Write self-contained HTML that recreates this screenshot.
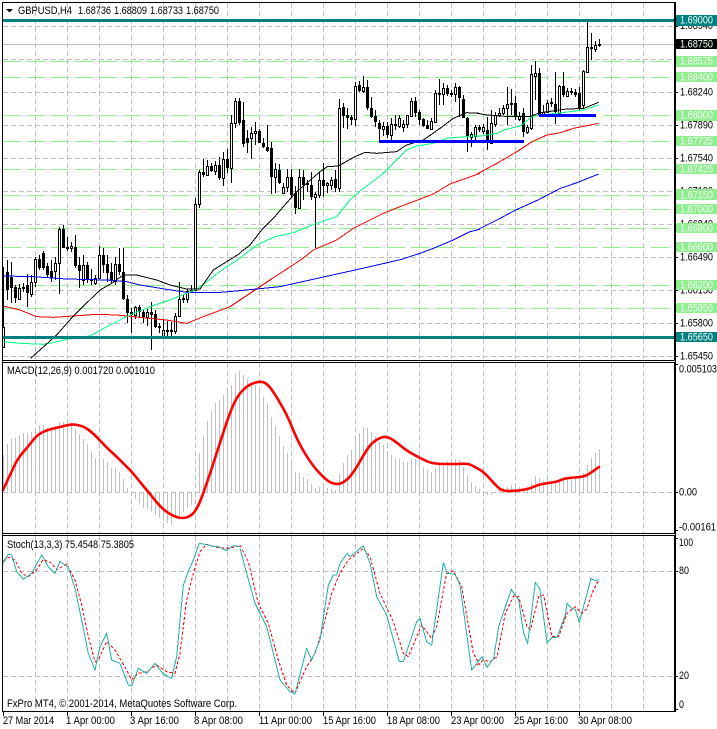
<!DOCTYPE html>
<html><head><meta charset="utf-8"><title>GBPUSD H4</title>
<style>html,body{margin:0;padding:0;background:#fff;width:717px;height:729px;overflow:hidden}svg{display:block}text{font-family:"Liberation Sans",sans-serif;font-size:11px;fill:#000}.l text{fill:#f4fff4}</style></head>
<body>
<svg width="717" height="729" viewBox="0 0 717 729" xmlns="http://www.w3.org/2000/svg">
<rect width="717" height="729" fill="#fff"/>
<!-- grid -->
<g fill="none" stroke="#c0c0c0" stroke-dasharray="5 3" shape-rendering="crispEdges">
<path d="M3 26.5H674M3 59.5H674M3 92.5H674M3 125.5H674M3 158.5H674M3 191.5H674M3 224.5H674M3 257.5H674M3 290.5H674M3 323.5H674M3 356.5H674M3 492.5H674M3 571.5H674M3 676.5H674"/>
<path id="v" d="M35.5 3V359M67.5 3V359M99.5 3V359M131.5 3V359M163.5 3V359M195.5 3V359M227.5 3V359M259.5 3V359M291.5 3V359M323.5 3V359M355.5 3V359M387.5 3V359M419.5 3V359M451.5 3V359M483.5 3V359M515.5 3V359M547.5 3V359M579.5 3V359M611.5 3V359M643.5 3V359"/>
<path d="M35.5 363V533M67.5 363V533M99.5 363V533M131.5 363V533M163.5 363V533M195.5 363V533M227.5 363V533M259.5 363V533M291.5 363V533M323.5 363V533M355.5 363V533M387.5 363V533M419.5 363V533M451.5 363V533M483.5 363V533M515.5 363V533M547.5 363V533M579.5 363V533M611.5 363V533M643.5 363V533"/>
<path d="M35.5 536V711M67.5 536V711M99.5 536V711M131.5 536V711M163.5 536V711M195.5 536V711M227.5 536V711M259.5 536V711M291.5 536V711M323.5 536V711M355.5 536V711M387.5 536V711M419.5 536V711M451.5 536V711M483.5 536V711M515.5 536V711M547.5 536V711M579.5 536V711M611.5 536V711M643.5 536V711"/>
</g>
<!-- level lines -->
<path d="M3 44.5H674" stroke="#c0c0c0" shape-rendering="crispEdges"/>
<path d="M3 61.5H669M3 77.5H669M3 115.5H669M3 141.5H669M3 169.5H669M3 195.5H669M3 209.5H669M3 228.5H669M3 247.5H669M3 285.5H669M3 308.5H669" stroke="#90ee90" stroke-dasharray="18 6" fill="none" shape-rendering="crispEdges"/>
<!-- wicks -->
<path fill="none" stroke="#000" shape-rendering="crispEdges" d="M3.5 267V347M7.5 260V300M11.5 262V303M15.5 285V303M19.5 284V300M23.5 283V292M27.5 274V307M31.5 275V297M35.5 257V287M39.5 255V270M43.5 251V270M47.5 263V278M51.5 260V282M55.5 257V280M59.5 227V294M63.5 225V248M67.5 237V251M71.5 242V252M75.5 235V268M79.5 257V288M83.5 255V285M87.5 262V283M91.5 269V285M95.5 275V285M99.5 246V278M103.5 248V273M107.5 255V282M111.5 263V283M115.5 257V285M119.5 248V275M123.5 248V300M127.5 295V323M131.5 308V333M135.5 306V319M139.5 305V317M143.5 310V323M147.5 309V326M151.5 302V350M155.5 310V328M159.5 323V333M163.5 319V338M167.5 321V338M171.5 322V338M175.5 313V334M179.5 282V317M183.5 295V303M187.5 289V303M191.5 285V293M195.5 198V290M199.5 170V208M203.5 159V177M207.5 160V175M211.5 163V172M215.5 161V175M219.5 157V180M223.5 152V186M227.5 149V173M231.5 115V183M235.5 98V128M239.5 98V125M243.5 102V147M247.5 130V153M251.5 127V159M255.5 122V145M259.5 129V143M263.5 138V148M267.5 125V152M271.5 142V194M275.5 163V193M279.5 164V184M283.5 183V194M287.5 169V192M291.5 169V197M295.5 186V214M299.5 169V209M303.5 170V200M307.5 180V192M311.5 172V200M315.5 192V248M319.5 172V198M323.5 163V197M327.5 182V193M331.5 177V190M335.5 170V192M339.5 99V192M343.5 103V128M347.5 108V129M351.5 115V125M355.5 82V126M359.5 81V92M363.5 76V93M367.5 80V110M371.5 97V118M375.5 110V127M379.5 120V142M383.5 122V136M387.5 122V138M391.5 118V140M395.5 115V130M399.5 115V128M403.5 120V132M407.5 115V128M411.5 98V117M415.5 97V117M419.5 110V125M423.5 118V127M427.5 120V129M431.5 118V130M435.5 90V123M439.5 79V105M443.5 83V105M447.5 85V96M451.5 90V97M455.5 83V102M459.5 86V117M463.5 95V118M467.5 117V152M471.5 132V147M475.5 125V142M479.5 125V132M483.5 124V134M487.5 117V150M491.5 110V143M495.5 112V127M499.5 108V117M503.5 105V115M507.5 87V125M511.5 89V115M515.5 96V120M519.5 112V121M523.5 108V137M527.5 125V134M531.5 65V130M535.5 61V100M539.5 68V117M543.5 105V117M547.5 100V113M551.5 98V107M555.5 72V124M559.5 85V115M563.5 72V97M567.5 88V97M571.5 88V95M575.5 89V97M579.5 87V110M583.5 70V109M587.5 21V72M591.5 33V60M595.5 41V52M599.5 39V47"/>
<!-- black bodies -->
<path fill="#000" shape-rendering="crispEdges" d="M6 272h3v18h-3zM10 277h3v11h-3zM14 287h3v11h-3zM22 287h3v2h-3zM26 285h3v8h-3zM38 259h3v9h-3zM42 253h3v15h-3zM46 266h3v9h-3zM50 271h3v7h-3zM62 229h3v19h-3zM66 247h3v2h-3zM74 247h3v19h-3zM78 265h3v6h-3zM86 265h3v14h-3zM90 279h3v2h-3zM102 255h3v10h-3zM106 264h3v9h-3zM110 272h3v9h-3zM118 264h3v8h-3zM122 272h3v27h-3zM126 299h3v14h-3zM130 312h3v3h-3zM138 307h3v5h-3zM142 312h3v5h-3zM150 312h3v3h-3zM154 314h3v13h-3zM158 326h3v2h-3zM166 330h3v2h-3zM170 330h3v2h-3zM182 298h3v2h-3zM190 290h3v3h-3zM202 172h3v3h-3zM210 166h3v5h-3zM218 165h3v13h-3zM226 159h3v9h-3zM238 101h3v22h-3zM242 120h3v24h-3zM246 138h3v5h-3zM258 131h3v12h-3zM262 143h3v4h-3zM266 147h3v4h-3zM270 148h3v29h-3zM278 170h3v13h-3zM290 177h3v18h-3zM294 193h3v15h-3zM302 177h3v8h-3zM306 183h3v2h-3zM310 185h3v12h-3zM322 180h3v6h-3zM334 179h3v9h-3zM342 107h3v9h-3zM346 115h3v3h-3zM350 117h3v3h-3zM358 85h3v6h-3zM366 87h3v21h-3zM370 108h3v9h-3zM374 116h3v6h-3zM378 123h3v6h-3zM386 126h3v9h-3zM394 124h3v2h-3zM414 101h3v12h-3zM418 112h3v8h-3zM422 119h3v7h-3zM426 125h3v4h-3zM438 93h3v2h-3zM446 88h3v6h-3zM450 93h3v2h-3zM458 87h3v11h-3zM462 99h3v19h-3zM466 118h3v19h-3zM478 127h3v3h-3zM486 130h3v13h-3zM510 103h3v2h-3zM514 103h3v14h-3zM522 113h3v19h-3zM538 73h3v42h-3zM550 102h3v2h-3zM554 104h3v8h-3zM562 86h3v9h-3zM570 91h3v2h-3zM574 92h3v3h-3zM578 93h3v16h-3zM590 47h3v2h-3zM598 44h3v2h-3z"/>
<!-- white bodies -->
<path fill="#fff" stroke="#000" shape-rendering="crispEdges" d="M2.5 327.5h2V347.5h-2zM18.5 288.5h2V299.5h-2zM30.5 282.5h2V294.5h-2zM34.5 259.5h2V282.5h-2zM54.5 263.5h2V271.5h-2zM58.5 229.5h2V263.5h-2zM70.5 246.5h2V248.5h-2zM82.5 265.5h2V280.5h-2zM94.5 278.5h2V283.5h-2zM98.5 255.5h2V278.5h-2zM114.5 264.5h2V281.5h-2zM134.5 307.5h2V315.5h-2zM146.5 312.5h2V317.5h-2zM162.5 330.5h2V338.5h-2zM174.5 316.5h2V331.5h-2zM178.5 299.5h2V316.5h-2zM186.5 291.5h2V299.5h-2zM194.5 204.5h2V290.5h-2zM198.5 172.5h2V204.5h-2zM206.5 166.5h2V175.5h-2zM214.5 165.5h2V171.5h-2zM222.5 159.5h2V178.5h-2zM230.5 123.5h2V168.5h-2zM234.5 101.5h2V123.5h-2zM250.5 133.5h2V138.5h-2zM254.5 131.5h2V133.5h-2zM274.5 169.5h2V177.5h-2zM282.5 187.5h2V193.5h-2zM286.5 177.5h2V187.5h-2zM298.5 177.5h2V208.5h-2zM314.5 194.5h2V197.5h-2zM318.5 180.5h2V195.5h-2zM326.5 183.5h2V185.5h-2zM330.5 180.5h2V185.5h-2zM338.5 108.5h2V188.5h-2zM354.5 86.5h2V119.5h-2zM362.5 87.5h2V91.5h-2zM382.5 126.5h2V129.5h-2zM390.5 124.5h2V135.5h-2zM398.5 118.5h2V126.5h-2zM402.5 124.5h2V127.5h-2zM406.5 115.5h2V124.5h-2zM410.5 101.5h2V116.5h-2zM430.5 121.5h2V129.5h-2zM434.5 93.5h2V122.5h-2zM442.5 88.5h2V94.5h-2zM454.5 87.5h2V94.5h-2zM470.5 134.5h2V137.5h-2zM474.5 127.5h2V136.5h-2zM482.5 127.5h2V131.5h-2zM490.5 123.5h2V143.5h-2zM494.5 115.5h2V124.5h-2zM498.5 113.5h2V115.5h-2zM502.5 108.5h2V113.5h-2zM506.5 104.5h2V108.5h-2zM518.5 116.5h2V119.5h-2zM526.5 127.5h2V132.5h-2zM530.5 74.5h2V128.5h-2zM534.5 73.5h2V76.5h-2zM542.5 112.5h2V115.5h-2zM546.5 103.5h2V112.5h-2zM558.5 86.5h2V113.5h-2zM566.5 91.5h2V96.5h-2zM582.5 71.5h2V105.5h-2zM586.5 47.5h2V72.5h-2zM594.5 45.5h2V49.5h-2z"/>
<!-- moving averages -->
<g fill="none" shape-rendering="crispEdges">
<g transform="translate(0,200) scale(.33333)">
<polyline vector-effect="non-scaling-stroke" stroke="#0000ff" points="10,228 100,230 200,237 320,240 380,245 420,255 500,268 560,277 650,278 720,272"/>
<polyline vector-effect="non-scaling-stroke" stroke="#ff0000" points="10,318 60,330 110,350 160,352 220,348 290,343 350,345 400,350 500,360 560,370 610,350 690,320 720,300 810,240 906,177"/>
<polyline vector-effect="non-scaling-stroke" stroke="#00ff7f" points="10,425 60,430 130,433 150,430 205,417 270,408 330,375 390,345 450,320 510,300 560,280 590,268 640,230 680,200 720,175"/>
<polyline vector-effect="non-scaling-stroke" stroke="#000" points="92,475 170,405 220,348 300,270 335,250 370,225 410,225 470,240 510,255 560,267 600,267 640,210 720,160"/>
</g>
<g transform="translate(240,60) scale(.33333)">
<polyline vector-effect="non-scaling-stroke" stroke="#0000ff" points="0,692 120,680 300,640 390,620 485,598 540,580 580,565 640,540 690,515 720,508"/>
<polyline vector-effect="non-scaling-stroke" stroke="#ff0000" points="185,598 220,570 290,540 340,505 430,460 480,440 580,402 630,372 720,340"/>
<polyline vector-effect="non-scaling-stroke" stroke="#00ff7f" points="0,595 30,570 60,550 105,530 160,518 230,490 290,470 330,420 370,385 430,340 500,270 530,258 580,250 620,235 700,228 720,228"/>
<polyline vector-effect="non-scaling-stroke" stroke="#000" points="0,578 30,555 65,510 100,475 130,440 170,395 200,370 240,335 262,320 295,318 345,290 375,277 410,280 470,275 500,255 550,240 600,205 640,175 680,158 720,160"/>
</g>
<g transform="translate(477,0) scale(.33333)">
<polyline vector-effect="non-scaling-stroke" stroke="#0000ff" points="0,690 60,660 120,628 183,600 250,565 300,548 365,522"/>
<polyline vector-effect="non-scaling-stroke" stroke="#ff0000" points="0,522 60,490 120,455 165,425 210,405 250,398 290,385 365,370"/>
<polyline vector-effect="non-scaling-stroke" stroke="#00ff7f" points="0,410 30,405 60,400 80,390 130,378 165,350 190,345 240,340 320,330 365,315"/>
<polyline vector-effect="non-scaling-stroke" stroke="#000" points="0,340 30,345 100,350 160,350 186,339 260,328 320,325 365,307"/>
</g>
</g>
<!-- levels on top -->
<rect x="3" y="19" width="671" height="3" fill="#008080"/>
<rect x="3" y="336" width="671" height="3" fill="#008080"/>
<rect x="379" y="140" width="145" height="3" fill="#0000ff"/>
<rect x="539" y="114" width="57" height="3" fill="#0000ff"/>
<!-- MACD histogram -->
<path fill="none" stroke="#c0c0c0" shape-rendering="crispEdges" d="M3.5 455V492M7.5 444V492M11.5 439V492M15.5 438V492M19.5 435V492M23.5 433V492M27.5 433V492M31.5 432V492M35.5 427V492M39.5 425V492M43.5 425V492M47.5 428V492M51.5 427V492M55.5 426V492M59.5 422V492M63.5 422V492M67.5 423V492M71.5 423V492M75.5 429V492M79.5 434V492M83.5 439V492M87.5 444V492M91.5 452V492M95.5 458V492M99.5 457V492M103.5 459V492M107.5 462V492M111.5 468V492M115.5 468V492M119.5 472V492M123.5 479V492M127.5 488V492M135.5 492V499M139.5 492V503M143.5 492V508M147.5 492V509M151.5 492V512M155.5 492V515M159.5 492V518M163.5 492V521M167.5 492V523M171.5 492V525M175.5 492V518M179.5 492V516M183.5 492V512M187.5 492V508M191.5 492V505M195.5 492V497M199.5 453V492M203.5 436V492M207.5 421V492M211.5 411V492M215.5 403V492M219.5 400V492M223.5 395V492M227.5 392V492M231.5 385V492M235.5 374V492M239.5 371V492M243.5 375V492M247.5 379V492M251.5 384V492M255.5 385V492M259.5 391V492M263.5 397V492M267.5 404V492M271.5 417V492M275.5 426V492M279.5 436V492M283.5 446V492M287.5 453V492M291.5 459V492M295.5 472V492M299.5 473V492M303.5 477V492M307.5 479V492M311.5 484V492M315.5 488V492M319.5 487V492M323.5 487V492M327.5 488V492M331.5 489V492M335.5 490V492M339.5 474V492M343.5 463V492M347.5 455V492M351.5 450V492M355.5 439V492M359.5 433V492M363.5 427V492M367.5 428V492M371.5 432V492M375.5 436V492M379.5 442V492M383.5 445V492M387.5 452V492M391.5 455V492M395.5 458V492M399.5 459V492M403.5 461V492M407.5 462V492M411.5 459V492M415.5 459V492M419.5 463V492M423.5 467V492M427.5 470V492M431.5 472V492M435.5 468V492M439.5 465V492M443.5 463V492M447.5 461V492M451.5 459V492M455.5 459V492M459.5 460V492M463.5 467V492M467.5 475V492M471.5 482V492M475.5 486V492M479.5 489V492M487.5 492V495M491.5 492V495M499.5 490V492M503.5 488V492M507.5 487V492M511.5 485V492M515.5 487V492M519.5 487V492M523.5 488V492M527.5 487V492M531.5 483V492M535.5 476V492M539.5 478V492M543.5 481V492M547.5 480V492M551.5 482V492M555.5 482V492M559.5 479V492M563.5 479V492M567.5 477V492M571.5 477V492M575.5 477V492M579.5 477V492M583.5 473V492M587.5 465V492M591.5 458V492M595.5 453V492M599.5 449V492"/>
<!-- MACD line -->
<path fill="none" stroke="#ff0000" stroke-width="2.6" stroke-linejoin="round" stroke-linecap="round" d="M3 490L6.5 482.5Q10 475 14 466.5Q18 458 22.5 453Q27 448 32 441.5Q37 435 42 432.5Q47 430 53.5 428.5Q60 427 66 425.5Q72 424 77.5 425Q83 426 88 429.5Q93 433 100 440.5Q107 448 112 452.5Q117 457 124.5 464.5Q132 472 136 477Q140 482 145 488Q150 494 156.5 502Q163 510 170 514Q177 518 182.5 518Q188 518 192.5 514Q197 510 202 496.5Q207 483 212 467.5Q217 452 223.5 432Q230 412 234 403.5Q238 395 243 390Q248 385 254 383Q260 381 264 382.5Q268 384 273 391.5Q278 399 283 408Q288 417 293 429.5Q298 442 305 453.5Q312 465 318.5 472Q325 479 329 481.5Q333 484 337.5 484Q342 484 347.5 479Q353 474 360.5 460.5Q368 447 372.5 443Q377 439 381.5 437.5Q386 436 390.5 438.5Q395 441 401 446Q407 451 414.5 455Q422 459 427.5 461.5Q433 464 445 464L458 464Q467 463 471 465Q475 467 479.5 469.5Q484 472 491.5 480.5Q499 489 502 490Q505 491 510 491Q515 491 522 490Q529 489 534.5 486.5Q540 484 548.5 483Q557 482 561 480Q565 478 574.5 477.5Q584 477 588 474.5Q592 472 599 467"/>
<!-- Stochastic -->
<g fill="none" shape-rendering="crispEdges">
<g transform="translate(0,530) scale(.33333)">
<polyline vector-effect="non-scaling-stroke" stroke="#ff0000" stroke-dasharray="3 2" points="10,92 25,82 45,90 65,130 85,140 110,120 130,88 155,100 170,120 200,102 225,150 245,225 265,320 285,395 295,390 320,335 345,360 380,420 395,450 415,430 440,425 470,405 500,425 525,430 540,370 560,210 580,130 600,65 620,43 650,52 680,55 720,48"/>
<polyline vector-effect="non-scaling-stroke" stroke="#20b2aa" points="10,100 25,72 35,75 50,125 70,148 95,130 125,75 145,110 165,130 180,95 205,112 225,175 250,295 265,370 285,420 300,350 320,310 335,390 360,400 385,465 395,468 415,415 440,430 465,400 490,432 515,445 530,380 550,165 565,125 580,90 598,40 625,45 640,50 650,48 665,55 680,62 700,47 720,50"/>
</g>
<g transform="translate(240,530) scale(.33333)">
<polyline vector-effect="non-scaling-stroke" stroke="#ff0000" stroke-dasharray="3 2" points="0,45 25,95 55,220 85,280 115,390 140,465 165,490 200,410 225,370 250,290 275,190 300,130 325,90 370,55 390,80 420,190 460,275 490,370 505,380 545,285 575,325 590,290 620,130 640,122 665,170 700,370 720,405"/>
<polyline vector-effect="non-scaling-stroke" stroke="#20b2aa" points="0,55 20,130 45,220 80,290 120,450 150,485 165,492 200,355 215,390 240,330 265,165 280,135 290,135 300,100 322,70 330,80 370,47 390,100 410,200 440,255 478,395 490,395 530,275 540,265 560,335 575,345 610,98 622,130 645,133 660,165 695,420 720,388"/>
</g>
<g transform="translate(477,530) scale(.33333)">
<polyline vector-effect="non-scaling-stroke" stroke="#ff0000" stroke-dasharray="3 2" points="0,405 20,390 40,395 60,380 85,250 110,198 125,200 150,290 160,300 185,200 200,195 225,320 245,320 270,250 295,230 315,250 330,235 345,190 365,150"/>
<polyline vector-effect="non-scaling-stroke" stroke="#20b2aa" points="0,398 15,380 30,412 50,385 65,290 103,178 125,210 140,310 152,340 175,157 188,175 210,337 225,322 240,322 265,255 270,220 285,235 295,238 307,277 342,145 355,152 365,148"/>
</g>
</g>
<!-- frames -->
<path fill="none" stroke="#000" shape-rendering="crispEdges" d="M2.5 2.5H674.5V360.5H2.5ZM2.5 362.5H674.5V533.5H2.5ZM2.5 535.5H674.5V711.5H2.5ZM2.5 2V712M675.5 2V712"/>
<path fill="none" stroke="#000" shape-rendering="crispEdges" d="M675 26.5h3M675 59.5h3M675 92.5h3M675 125.5h3M675 158.5h3M675 191.5h3M675 224.5h3M675 257.5h3M675 290.5h3M675 323.5h3M675 356.5h3M675 364.5h3M675 492.5h3M675 530.5h3M675 538.5h3M675 571.5h3M675 676.5h3M675 709.5h3M3.5 712v4M67.5 712v4M131.5 712v4M195.5 712v4M259.5 712v4M323.5 712v4M387.5 712v4M451.5 712v4M515.5 712v4M579.5 712v4"/>
<!-- axis text under labels -->
<g>
<text x="680" y="29" textLength="33" lengthAdjust="spacingAndGlyphs">1.68940</text>
<text x="680" y="95.5" textLength="33" lengthAdjust="spacingAndGlyphs">1.68240</text>
<text x="680" y="128.5" textLength="33" lengthAdjust="spacingAndGlyphs">1.67890</text>
<text x="680" y="161.5" textLength="33" lengthAdjust="spacingAndGlyphs">1.67540</text>
<text x="680" y="194.5" textLength="33" lengthAdjust="spacingAndGlyphs">1.67190</text>
<text x="680" y="227.5" textLength="33" lengthAdjust="spacingAndGlyphs">1.66840</text>
<text x="680" y="260.5" textLength="33" lengthAdjust="spacingAndGlyphs">1.66490</text>
<text x="680" y="293.5" textLength="33" lengthAdjust="spacingAndGlyphs">1.66130</text>
<text x="680" y="326.5" textLength="33" lengthAdjust="spacingAndGlyphs">1.65800</text>
<text x="680" y="359.5" textLength="33" lengthAdjust="spacingAndGlyphs">1.65450</text>
<text x="679" y="372.5" textLength="38" lengthAdjust="spacingAndGlyphs">0.005103</text>
<text x="679" y="495.5" textLength="18" lengthAdjust="spacingAndGlyphs">0.00</text>
<text x="679" y="530.5" textLength="37" lengthAdjust="spacingAndGlyphs">-0.00161</text>
<text x="679" y="546" textLength="14" lengthAdjust="spacingAndGlyphs">100</text>
<text x="679" y="574" textLength="10" lengthAdjust="spacingAndGlyphs">80</text>
<text x="679" y="679" textLength="10" lengthAdjust="spacingAndGlyphs">20</text>
<text x="679" y="708" textLength="5" lengthAdjust="spacingAndGlyphs">0</text>
</g>
<!-- price labels -->
<g shape-rendering="crispEdges">
<rect x="676" y="15" width="41" height="11" fill="#008080"/>
<rect x="676" y="39" width="41" height="10" fill="#000"/>
<rect x="676" y="56" width="41" height="11" fill="#90ee90"/>
<rect x="676" y="72" width="41" height="10" fill="#90ee90"/>
<rect x="676" y="110" width="41" height="11" fill="#90ee90"/>
<rect x="676" y="136" width="41" height="10" fill="#90ee90"/>
<rect x="676" y="164" width="41" height="10" fill="#90ee90"/>
<rect x="676" y="189" width="41" height="11" fill="#90ee90"/>
<rect x="676" y="204" width="41" height="10" fill="#90ee90"/>
<rect x="676" y="223" width="41" height="10" fill="#90ee90"/>
<rect x="676" y="242" width="41" height="10" fill="#90ee90"/>
<rect x="676" y="280" width="41" height="10" fill="#90ee90"/>
<rect x="676" y="303" width="41" height="10" fill="#90ee90"/>
<rect x="676" y="332" width="41" height="10" fill="#008080"/>
</g>
<g class="l">
<text x="680" y="23.5" textLength="33" lengthAdjust="spacingAndGlyphs">1.69000</text>
<text x="680" y="47.5" textLength="33" lengthAdjust="spacingAndGlyphs">1.68750</text>
<text x="680" y="64.5" textLength="33" lengthAdjust="spacingAndGlyphs">1.68575</text>
<text x="680" y="80.5" textLength="33" lengthAdjust="spacingAndGlyphs">1.68400</text>
<text x="680" y="118.5" textLength="33" lengthAdjust="spacingAndGlyphs">1.68000</text>
<text x="680" y="144.5" textLength="33" lengthAdjust="spacingAndGlyphs">1.67725</text>
<text x="680" y="172.5" textLength="33" lengthAdjust="spacingAndGlyphs">1.67425</text>
<text x="680" y="198.5" textLength="33" lengthAdjust="spacingAndGlyphs">1.67150</text>
<text x="680" y="212.5" textLength="33" lengthAdjust="spacingAndGlyphs">1.67000</text>
<text x="680" y="231.5" textLength="33" lengthAdjust="spacingAndGlyphs">1.66800</text>
<text x="680" y="250.5" textLength="33" lengthAdjust="spacingAndGlyphs">1.66600</text>
<text x="680" y="288.5" textLength="33" lengthAdjust="spacingAndGlyphs">1.66200</text>
<text x="680" y="311.5" textLength="33" lengthAdjust="spacingAndGlyphs">1.65950</text>
<text x="680" y="340.5" textLength="33" lengthAdjust="spacingAndGlyphs">1.65650</text>
</g>
<!-- header -->
<path d="M6 9h7l-3.5 3.5z" fill="#000"/>
<text x="18" y="14" textLength="54" lengthAdjust="spacingAndGlyphs">GBPUSD,H4</text>
<text x="78" y="14" textLength="33" lengthAdjust="spacingAndGlyphs">1.68736</text>
<text x="114" y="14" textLength="33" lengthAdjust="spacingAndGlyphs">1.68809</text>
<text x="150" y="14" textLength="33" lengthAdjust="spacingAndGlyphs">1.68733</text>
<text x="186" y="14" textLength="33" lengthAdjust="spacingAndGlyphs">1.68750</text>
<text x="7" y="374" textLength="148" lengthAdjust="spacingAndGlyphs">MACD(12,26,9) 0.001720 0.001010</text>
<text x="7" y="548" textLength="127" lengthAdjust="spacingAndGlyphs">Stoch(13,3,3) 75.4548 75.3805</text>
<text x="7" y="707" textLength="230" lengthAdjust="spacingAndGlyphs">FxPro MT4, © 2001-2014, MetaQuotes Software Corp.</text>
<!-- time axis -->
<text x="3" y="724" textLength="51" lengthAdjust="spacingAndGlyphs">27 Mar 2014</text>
<text x="66" y="724" textLength="49" lengthAdjust="spacingAndGlyphs">1 Apr 00:00</text>
<text x="130" y="724" textLength="49" lengthAdjust="spacingAndGlyphs">3 Apr 16:00</text>
<text x="194" y="724" textLength="49" lengthAdjust="spacingAndGlyphs">8 Apr 08:00</text>
<text x="259" y="724" textLength="53" lengthAdjust="spacingAndGlyphs">11 Apr 00:00</text>
<text x="323" y="724" textLength="53" lengthAdjust="spacingAndGlyphs">15 Apr 16:00</text>
<text x="387" y="724" textLength="53" lengthAdjust="spacingAndGlyphs">18 Apr 08:00</text>
<text x="451" y="724" textLength="53" lengthAdjust="spacingAndGlyphs">23 Apr 00:00</text>
<text x="514" y="724" textLength="54" lengthAdjust="spacingAndGlyphs">25 Apr 16:00</text>
<text x="578" y="724" textLength="54" lengthAdjust="spacingAndGlyphs">30 Apr 08:00</text>
</svg>
</body></html>
